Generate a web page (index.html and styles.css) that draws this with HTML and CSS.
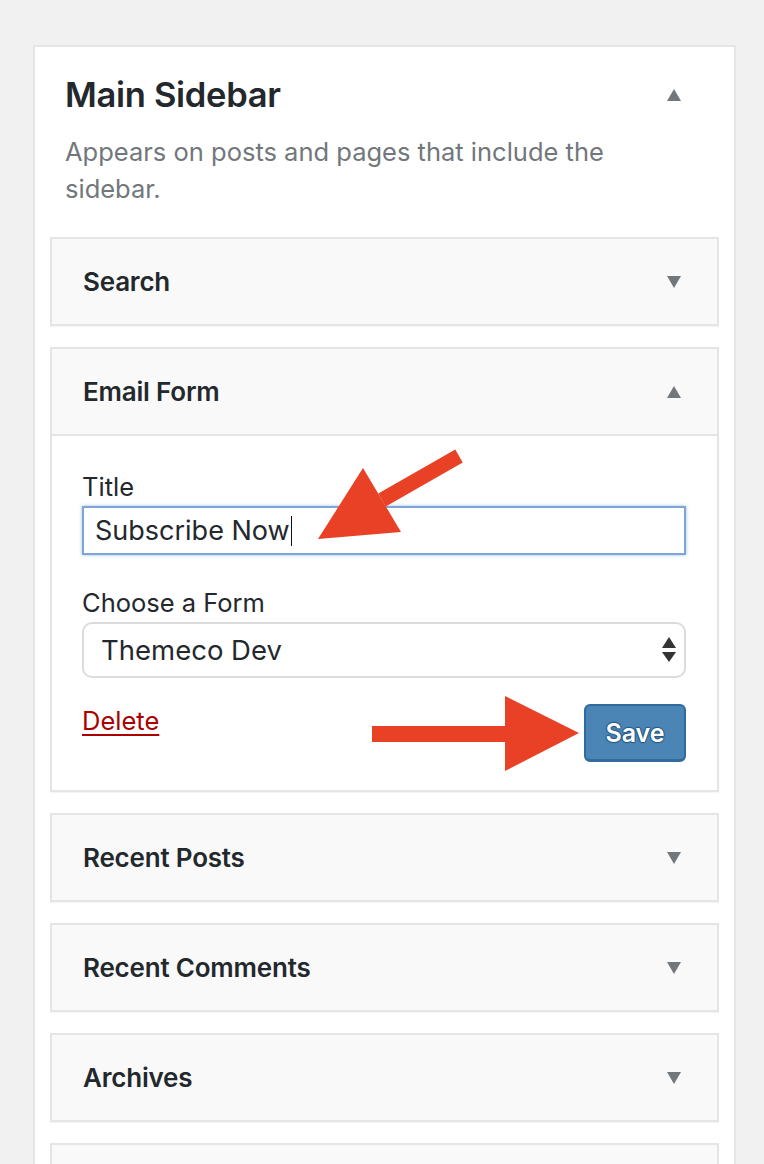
FILE: index.html
```html
<!DOCTYPE html>
<html lang="en">
<head>
<meta charset="utf-8">
<title>Widgets</title>
<link rel="stylesheet" href="styles.css">
</head>
<body>
<div class="page">
  <section class="sidebar">
    <div class="sidebar-head">
      <h2 class="sidebar-title">Main Sidebar</h2>
      <span class="tri tri-up"></span>
    </div>
    <p class="sidebar-desc">Appears on posts and pages that include the sidebar.</p>

    <div class="widgets">
      <div class="widget">
        <div class="widget-head"><h3>Search</h3><span class="tri tri-down"></span></div>
      </div>

      <div class="widget open">
        <div class="widget-head"><h3>Email Form</h3><span class="tri tri-up"></span></div>
        <div class="widget-body">
          <label class="field-label">Title</label>
          <div class="text-input"><span>Subscribe Now</span><span class="caret"></span></div>
          <label class="field-label second">Choose a Form</label>
          <div class="select">
            <span>Themeco Dev</span>
            <svg class="updown" width="14" height="26" viewBox="0 0 14 26"><polygon points="7,0 14,11 0,11" fill="#333"/><polygon points="0,15 14,15 7,25" fill="#333"/></svg>
          </div>
          <div class="actions">
            <a class="delete" href="#">Delete</a>
            <button class="save">Save</button>
          </div>
        </div>
      </div>

      <div class="widget">
        <div class="widget-head"><h3>Recent Posts</h3><span class="tri tri-down"></span></div>
      </div>
      <div class="widget">
        <div class="widget-head"><h3>Recent Comments</h3><span class="tri tri-down"></span></div>
      </div>
      <div class="widget">
        <div class="widget-head"><h3>Archives</h3><span class="tri tri-down"></span></div>
      </div>
      <div class="widget">
        <div class="widget-head"></div>
      </div>
    </div>
  </section>

  <svg class="annotations" width="764" height="1164" viewBox="0 0 764 1164">
    <line x1="382" y1="500" x2="459" y2="456" stroke="#e94126" stroke-width="15"/>
    <polygon points="363,468 318,539 401,532" fill="#e94126"/>
    <rect x="372" y="726" width="134" height="16" fill="#e94126"/>
    <polygon points="505,696 505,771 579,733" fill="#e94126"/>
  </svg>
</div>
</body>
</html>
```

FILE: styles.css
```css
* { box-sizing: border-box; }
html, body { margin: 0; padding: 0; }
body {
  background: #f1f1f1;
  font-family: "Inter", "Liberation Sans", sans-serif;
  color: #23282d;
}
.page {
  position: relative;
  height: 1164px;
  overflow: hidden;
  padding: 45px 0 0 33px;
}
.sidebar {
  width: 703px;
  background: #fff;
  border: 2px solid #e5e5e5;
  border-bottom: none;
  min-height: 1200px;
}
.sidebar-head {
  display: flex;
  align-items: center;
  justify-content: space-between;
  padding: 28px 53px 0 30px;
  height: 68px;
}
.sidebar-title {
  margin: 0;
  font-size: 34.5px;
  line-height: 40px;
  font-weight: 600;
  color: #23282d;
  letter-spacing: -0.3px;
}
.sidebar-desc {
  margin: 18px 80px 0 30px;
  font-size: 25.5px;
  line-height: 37px;
  color: #72777c;
}
.widgets {
  padding: 30px 15px 0 15px;
  display: flex;
  flex-direction: column;
  gap: 21px;
}
.widget {
  border: 2px solid #e5e5e5;
  background: #f9f9f9;
  box-shadow: 0 1px 1px rgba(0,0,0,0.04);
}
.widget-head {
  height: 85px;
  display: flex;
  align-items: center;
  justify-content: space-between;
  padding: 0 36px 0 31px;
}
.widget-head h3 {
  margin: 0;
  font-size: 26px;
  font-weight: 600;
  color: #23282d;
  letter-spacing: -0.2px;
}
.widget.open .widget-head { border-bottom: 2px solid #e5e5e5; height: 87px; }
.tri {
  width: 0;
  height: 0;
  border-left: 7.5px solid transparent;
  border-right: 7.5px solid transparent;
}
.tri-up { border-bottom: 12px solid #72777c; }
.tri-down { border-top: 12px solid #72777c; }
.widget-body {
  background: #fff;
  padding: 36px 31px 28px 30px;
}
.field-label {
  display: block;
  font-size: 25.5px;
  line-height: 30px;
  color: #23282d;
}
.field-label.second { margin-top: 33px; }
.text-input {
  margin-top: 4px;
  height: 49px;
  border: 2px solid #7ea4d8;
  box-shadow: 0 0 3px rgba(30,140,190,0.5);
  display: flex;
  align-items: center;
  padding-left: 11px;
  font-size: 27px;
  color: #23282d;
}
.caret {
  display: inline-block;
  width: 1.5px;
  height: 30px;
  background: #111;
  margin-left: 1px;
}
.select {
  margin-top: 4px;
  height: 56px;
  border: 2px solid #dcdcdc;
  border-radius: 10px;
  display: flex;
  align-items: center;
  justify-content: space-between;
  padding: 0 8px 0 17px;
  font-size: 27.5px;
  color: #23282d;
}
.updown { display: block; }
.actions {
  margin-top: 26px;
  display: flex;
  justify-content: space-between;
  align-items: flex-start;
}
.delete {
  margin-top: 2px;
  font-size: 25.5px;
  line-height: 30px;
  color: #a00;
  text-decoration: underline;
  text-underline-offset: 4px;
}
.save {
  width: 102px;
  height: 58px;
  background: #4a85b6;
  border: 2px solid #306b9b;
  border-bottom-width: 3px;
  border-radius: 6px;
  color: #fff;
  font-family: "Inter", "Liberation Sans", sans-serif;
  font-size: 25px;
  font-weight: 600;
  text-shadow: 0 -1px 1px #24557f, 1px 0 1px #24557f, 0 1px 1px #24557f, -1px 0 1px #24557f;
  padding: 0;
}
.annotations {
  position: absolute;
  top: 0;
  left: 0;
  pointer-events: none;
}
```
